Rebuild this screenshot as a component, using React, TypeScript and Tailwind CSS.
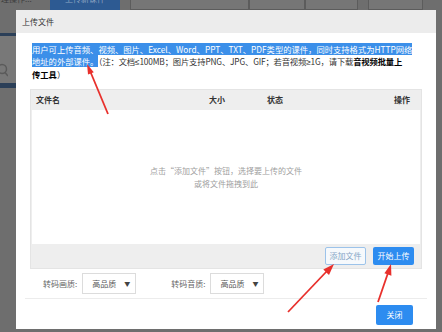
import React from "react";

const font = { fontFamily: '"Noto Sans CJK SC", "Noto Sans", sans-serif' };

function Backdrop() {
  return (
    <div className="absolute inset-0 bg-[#6e6e6e]">
      {/* toolbar of the page behind, cut off at the top */}
      <div className="h-[10px] overflow-hidden flex items-end">
        <div className="flex items-center h-[22px] w-full">
          <span className="text-[8px] text-[#3a3a3a] w-[50px] pl-[1px]">理操作...</span>
          <div className="w-[70px] h-full bg-[#2d5a92] flex items-center justify-center text-[8px] text-[#8fa6c4]">
            上传新课件
          </div>
          <div className="ml-[10px] w-[119px] h-full border border-[#5c5c5c] bg-[#767676]" />
          <div className="w-[56px] h-full border border-[#5c5c5c] bg-[#767676]" />
          <div className="w-[53px] h-full border border-[#5c5c5c] bg-[#767676]" />
          <div className="ml-[10px] w-[55px] h-full border border-[#5c5c5c] bg-[#767676]" />
        </div>
      </div>
      {/* sidebar strip on the left */}
      <div className="w-[16px] mt-[23px] h-[3px] bg-[#2b3f58]" />
      <div className="w-[16px] h-[47px] bg-[#787878] flex items-end pb-[6px]">
        <svg width="12" height="14" viewBox="0 0 12 14" className="-ml-[4px]">
          <circle cx="6" cy="6" r="4.5" fill="none" stroke="#5a5a5a" strokeWidth="1.5" />
          <line x1="9" y1="9.5" x2="12" y2="13" stroke="#5a5a5a" strokeWidth="1.5" />
        </svg>
      </div>
      <div className="w-[16px] h-[5px] bg-[#2b3f58]" />
    </div>
  );
}

function Select() {
  return (
    <div className="w-[54px] h-[21px] border border-[#dcdcdc] bg-white flex items-center justify-between pl-[9px] pr-[5px] text-[8px] text-[#555]">
      <span>高品质</span>
      <span className="text-[6px] text-[#444]">▼</span>
    </div>
  );
}

function Arrows() {
  return (
    <svg
      className="absolute inset-0 pointer-events-none"
      width="442"
      height="332"
      viewBox="0 0 442 332"
    >
      <g stroke="#e8302c" strokeWidth="1.8" fill="#e8302c">
        <line x1="108" y1="114" x2="90.5" y2="72" />
        <polygon points="87,64 93.8,72.3 88,74.6" stroke="none" />
        <line x1="288" y1="312" x2="327" y2="271" />
        <polygon points="334,264 329,275 323.3,269.6" stroke="none" />
        <line x1="378" y1="302" x2="388" y2="273" />
        <polygon points="391,264 391.4,275.8 384.4,273.3" stroke="none" />
      </g>
    </svg>
  );
}

export default function App() {
  return (
    <div className="relative w-[442px] h-[332px] overflow-hidden" style={font}>
      <Backdrop />

      {/* dialog */}
      <div className="absolute left-[16px] top-[10px] w-[420px] h-[319px] bg-white flex flex-col">
        <div className="h-[23px] bg-[#ececec] flex items-center px-[6px] text-[8px] text-[#333]">
          上传文件
        </div>

        <div className="px-[14px] pt-[10px]">
          <p className="pl-[2px] text-[8.3px] leading-[12px] text-[#333] whitespace-nowrap">
            <span className="bg-[#3b8fe9] text-white">
              用户可上传音频、视频、图片、Excel、Word、PPT、TXT、PDF类型的课件，同时支持格式为HTTP网络
            </span>
            <br />
            <span className="bg-[#3b8fe9] text-white">地址的外部课件。</span>
            <span className="tracking-[-0.15px]">
              （注：文档<span className="font-['Liberation_Sans']">≤</span>100MB；图片支持PNG、JPG、GIF；若音视频
              <span className="font-['Liberation_Sans']">≥</span>1G，请下载
              <b className="text-black">音视频批量上</b>
            </span>
            <br />
            <b className="text-black">传工具</b>）
          </p>

          {/* file table */}
          <div className="mt-[9px] bg-[#eeeeee] border border-[#e4e4e4]">
            <div className="h-[20px] flex items-center text-[8px] font-bold text-[#333]">
              <span className="w-[178px] pl-[5px]">文件名</span>
              <span className="w-[58px]">大小</span>
              <span className="flex-1">状态</span>
              <span className="pr-[11px]">操作</span>
            </div>
            <div className="mx-[1px] h-[134px] bg-white flex flex-col items-center justify-center text-[8px] leading-[13px] text-[#a0a0a0]">
              <span>点击“添加文件”按钮，选择要上传的文件</span>
              <span>或将文件拖拽到此</span>
            </div>
            <div className="h-[24px] flex items-center justify-end gap-[7px] pr-[7px]">
              <button className="w-[41px] h-[18px] rounded-[2px] border border-[#9cc3ea] bg-[#f6f9fc] text-[8px] text-[#86a6c6]">
                添加文件
              </button>
              <button className="w-[41px] h-[18px] rounded-[2px] bg-[#2d8cf0] text-[8px] text-white">
                开始上传
              </button>
            </div>
          </div>

          {/* transcoding options */}
          <div className="mt-[4px] flex items-center pl-[13px] text-[8px] text-[#666]">
            <span className="mr-[5px]">转码画质:</span>
            <Select />
            <span className="ml-[35px] mr-[5px]">转码音质:</span>
            <Select />
          </div>
        </div>

        <div className="mx-[9px] mt-[4px] h-px bg-[#ececec]" />

        <div className="flex justify-end pr-[23px] pt-[6px]">
          <button className="w-[37px] h-[20px] rounded-[2px] bg-[#2d8cf0] text-[8px] text-white">
            关闭
          </button>
        </div>
      </div>

      <Arrows />
    </div>
  );
}
